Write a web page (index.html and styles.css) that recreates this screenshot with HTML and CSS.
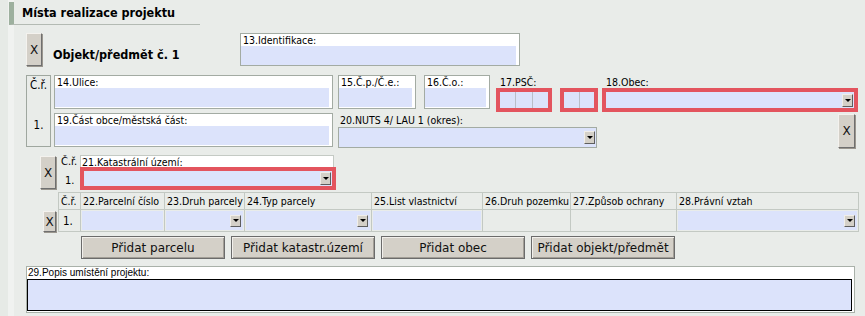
FILE: index.html
```html
<!DOCTYPE html>
<html lang="cs">
<head>
    <meta charset="UTF-8">
    <title>Místa realizace projektu</title>
    <link rel="stylesheet" href="styles.css">
</head>
<body>
    <div class="page">
        <h2 class="section-title">Místa realizace projektu</h2>

        <div class="object">
            <div class="object-head">
                <button class="btn-x btn-x-big">X</button>
                <span class="object-title">Objekt/předmět č. 1</span>
                <div class="field field-ident">
                    <span class="field-label">13.Identifikace:</span>
                    <span class="field-input"></span>
                </div>
            </div>

            <div class="address">
                <div class="rownum">
                    <span>Č.ř.</span>
                    <span class="rownum-val">1.</span>
                </div>
                <div class="address-lines">
                    <div class="line line-top">
                        <div class="field field-street">
                            <span class="field-label">14.Ulice:</span>
                            <span class="field-input"></span>
                        </div>
                        <div class="field field-cp">
                            <span class="field-label">15.Č.p./Č.e.:</span>
                            <span class="field-input"></span>
                        </div>
                        <div class="field field-co">
                            <span class="field-label">16.Č.o.:</span>
                            <span class="field-input"></span>
                        </div>
                        <div class="group group-psc">
                            <span class="group-label">17.PSČ:</span>
                            <div class="psc">
                                <div class="red-box psc-a">
                                    <span class="cell"></span><span class="cell"></span><span class="cell"></span>
                                </div>
                                <div class="red-box psc-b">
                                    <span class="cell"></span><span class="cell"></span>
                                </div>
                            </div>
                        </div>
                        <div class="group group-obec">
                            <span class="group-label">18.Obec:</span>
                            <div class="red-box">
                                <div class="select"><span class="arrow"></span></div>
                            </div>
                        </div>
                    </div>
                    <div class="line line-bottom">
                        <div class="field field-street field-tall">
                            <span class="field-label">19.Část obce/městská část:</span>
                            <span class="field-input"></span>
                        </div>
                        <div class="group group-nuts">
                            <span class="group-label">20.NUTS 4/ LAU 1 (okres):</span>
                            <div class="select select-plain"><span class="arrow"></span></div>
                        </div>
                        <button class="btn-x btn-x-big btn-x-right">X</button>
                    </div>
                </div>
            </div>

            <div class="katastr">
                <button class="btn-x btn-x-big">X</button>
                <div class="rownum-small">
                    <span>Č.ř.</span>
                    <span class="rownum-small-val">1.</span>
                </div>
                <div class="katastr-field">
                    <span class="katastr-label">21.Katastrální území:</span>
                    <div class="red-box">
                        <div class="select"><span class="arrow"></span></div>
                    </div>
                </div>
            </div>

            <div class="parcels">
                <button class="btn-x btn-x-small">X</button>
                <table class="parcel-table">
                    <colgroup>
                        <col class="c-num">
                        <col class="c-22">
                        <col class="c-23">
                        <col class="c-24">
                        <col class="c-25">
                        <col class="c-26">
                        <col class="c-27">
                        <col class="c-28">
                    </colgroup>
                    <tr>
                        <th>Č.ř.</th>
                        <th>22.Parcelní číslo</th>
                        <th>23.Druh parcely</th>
                        <th>24.Typ parcely</th>
                        <th>25.List vlastnictví</th>
                        <th>26.Druh pozemku</th>
                        <th>27.Způsob ochrany</th>
                        <th>28.Právní vztah</th>
                    </tr>
                    <tr>
                        <td class="num">1.</td>
                        <td><span class="cell-input"></span></td>
                        <td><div class="select cell-select"><span class="arrow"></span></div></td>
                        <td><div class="select cell-select"><span class="arrow"></span></div></td>
                        <td><span class="cell-input"></span></td>
                        <td></td>
                        <td></td>
                        <td><div class="select cell-select"><span class="arrow"></span></div></td>
                    </tr>
                </table>
            </div>

            <div class="actions">
                <button class="btn">Přidat parcelu</button>
                <button class="btn">Přidat katastr.území</button>
                <button class="btn">Přidat obec</button>
                <button class="btn">Přidat objekt/předmět</button>
            </div>

            <div class="popis">
                <span class="popis-label">29.Popis umístění projektu:</span>
                <span class="popis-input"></span>
            </div>
        </div>
    </div>
</body>
</html>
```

FILE: styles.css
```css
* {
    margin: 0;
    padding: 0;
    box-sizing: border-box;
}

body {
    background: #e6eae6;
    font-family: "DejaVu Sans Condensed", "DejaVu Sans", sans-serif;
    font-size: 10.5px;
    color: #000;
    overflow: hidden;
}

.page {
    margin-left: 8px;
    border-left: 6px solid #f0f2f0;
    background: #e9ece9;
    height: 316px;
    padding-top: 2px;
}

.section-title {
    margin-left: -5px;
    width: 191px;
    height: 23px;
    border-left: 5px solid #9db09e;
    border-bottom: 1px solid #b3bab3;
    padding-left: 8px;
    font-size: 12.5px;
    font-weight: bold;
    line-height: 22px;
}

.object {
    margin-top: 8px;
    padding-left: 12px;
}

/* buttons */
.btn-x {
    background: #d4d0c8;
    border: 1px solid;
    border-color: #f4f2ee #6f6f6f #6f6f6f #f4f2ee;
    box-shadow: 1px 1px 0 #9a968e;
    font-family: "DejaVu Sans", sans-serif;
    font-size: 12px;
    color: #111;
}

.btn-x-big {
    width: 16px;
    height: 33px;
}

.btn-x-small {
    width: 13px;
    height: 21px;
}

.btn {
    width: 144px;
    height: 23px;
    background: #d4d0c8;
    border: 1px solid #6b6b6b;
    box-shadow: inset 1px 1px 0 #f2f0ec, inset -1px -1px 0 #a29e96;
    font-family: "DejaVu Sans", sans-serif;
    font-size: 12px;
    color: #111;
}

/* fields */
.field {
    display: flex;
    flex-direction: column;
    height: 34px;
    background: #fff;
    border: 1px solid #a3aba3;
}

.field-label {
    display: block;
    height: 12px;
    line-height: 12px;
    padding-left: 2px;
    white-space: nowrap;
}

.field-input {
    display: block;
    height: 19px;
    margin-right: 3px;
    background: #dce3fb;
}

.group-label {
    display: block;
    height: 12px;
    line-height: 12px;
    white-space: nowrap;
}

.red-box {
    display: flex;
    height: 24px;
    border: 4px solid #e3545e;
    background: #dce3fb;
}

.select {
    display: flex;
    flex: 1;
    justify-content: flex-end;
    align-items: center;
    background: #dce3fb;
    padding-right: 1px;
}

.arrow {
    display: flex;
    justify-content: center;
    align-items: center;
    width: 11px;
    height: 13px;
    background: #d4d0c8;
    border: 1px solid;
    border-color: #f0eee9 #5e5e5e #5e5e5e #f0eee9;
}

.arrow::after {
    content: "";
    border-left: 3px solid transparent;
    border-right: 3px solid transparent;
    border-top: 3px solid #000;
}

/* object header */
.object-head {
    display: flex;
    align-items: flex-start;
    height: 33px;
}

.object-title {
    width: 187px;
    margin-left: 11px;
    margin-top: 14px;
    font-size: 12.5px;
    font-weight: bold;
    white-space: nowrap;
}

.field-ident {
    width: 280px;
    height: 33px;
}

/* address block */
.address {
    display: flex;
    margin-top: 9px;
}

.rownum {
    display: flex;
    flex-direction: column;
    align-items: center;
    width: 25px;
    height: 72px;
    border: 1px solid #9fa79f;
    font-size: 11.5px;
    padding-top: 2px;
}

.rownum-val {
    margin-top: 26px;
}

.address-lines {
    width: 804px;
    margin-left: 3px;
}

.line {
    display: flex;
    align-items: flex-start;
}

.line-top {
    height: 36px;
}

.line-bottom {
    margin-top: 2px;
}

.field-street {
    width: 279px;
}

.field-cp {
    width: 78px;
    margin-left: 5px;
}

.field-co {
    width: 66px;
    margin-left: 8px;
}

.group-psc {
    margin-left: 6px;
}

.group-psc .group-label,
.group-obec .group-label {
    padding-left: 4px;
    margin-top: 1px;
}

.psc {
    display: flex;
    gap: 8px;
}

.psc-a {
    width: 56px;
}

.psc-b {
    width: 38px;
}

.cell {
    flex: 1;
    border-right: 1px solid #b9bec9;
}

.cell:last-child {
    border-right: none;
}

.group-obec {
    width: 256px;
    margin-left: 4px;
}

.group-nuts {
    width: 259px;
    margin-left: 5px;
}

.group-nuts .group-label {
    height: 14px;
    padding-left: 2px;
    padding-top: 1px;
}

.select-plain {
    height: 21px;
    border: 1px solid #a3aba3;
}

.btn-x-right {
    margin-left: auto;
    margin-right: 3px;
    margin-top: 1px;
    width: 17px;
    height: 34px;
}

/* katastr */
.katastr {
    display: flex;
    align-items: flex-start;
    margin-top: 7px;
}

.katastr .btn-x {
    margin-left: 14px;
    margin-top: 1px;
}

.rownum-small {
    display: flex;
    flex-direction: column;
    width: 22px;
    margin-left: 2px;
    padding-left: 3px;
    font-size: 11px;
    line-height: 12px;
    padding-top: 1px;
}

.rownum-small-val {
    margin-top: 7px;
    padding-left: 4px;
}

.katastr-field {
    width: 256px;
}

.katastr-label {
    display: block;
    height: 12px;
    line-height: 12px;
    padding-left: 1px;
    background: #fff;
    border: 1px solid #c4cac4;
    border-bottom: none;
    margin-right: 2px;
}

.katastr .red-box {
    height: 23px;
}

/* parcels */
.parcels {
    display: flex;
    align-items: flex-end;
    margin-top: 2px;
}

.parcels .btn-x {
    margin-left: 17px;
    margin-right: 2px;
}

.parcel-table {
    width: 800px;
    table-layout: fixed;
    border-collapse: collapse;
}

.parcel-table th,
.parcel-table td {
    border: 1px solid #c3c9c3;
}

.parcel-table th {
    height: 17px;
    padding-left: 2px;
    font-weight: normal;
    text-align: left;
    white-space: nowrap;
    overflow: hidden;
}

.parcel-table td {
    height: 22px;
    padding: 1px;
}

.parcel-table td.num {
    padding-left: 4px;
    font-size: 11.5px;
}

.c-num { width: 22px; }
.c-22 { width: 84px; }
.c-23 { width: 80px; }
.c-24 { width: 127px; }
.c-25 { width: 111px; }
.c-26 { width: 88px; }
.c-27 { width: 106px; }
.c-28 { width: 182px; }

.cell-input {
    display: block;
    height: 19px;
    background: #dce3fb;
}

.cell-select {
    height: 19px;
    padding-right: 2px;
}

.cell-select .arrow {
    width: 11px;
    height: 12px;
}

/* actions */
.actions {
    display: flex;
    gap: 6px;
    margin-top: 4px;
    padding-left: 55px;
}

/* description */
.popis {
    display: flex;
    flex-direction: column;
    width: 829px;
    height: 47px;
    margin-top: 7px;
    background: #fff;
    border: 1px solid #a9b1a9;
}

.popis-label {
    display: block;
    height: 12px;
    line-height: 12px;
    padding-left: 1px;
    font-family: "Liberation Sans", Arial, sans-serif;
    font-size: 10px;
}

.popis-input {
    display: block;
    height: 32px;
    margin-right: 2px;
    background: #dce3fb;
    border: 1px solid #000;
}
```
